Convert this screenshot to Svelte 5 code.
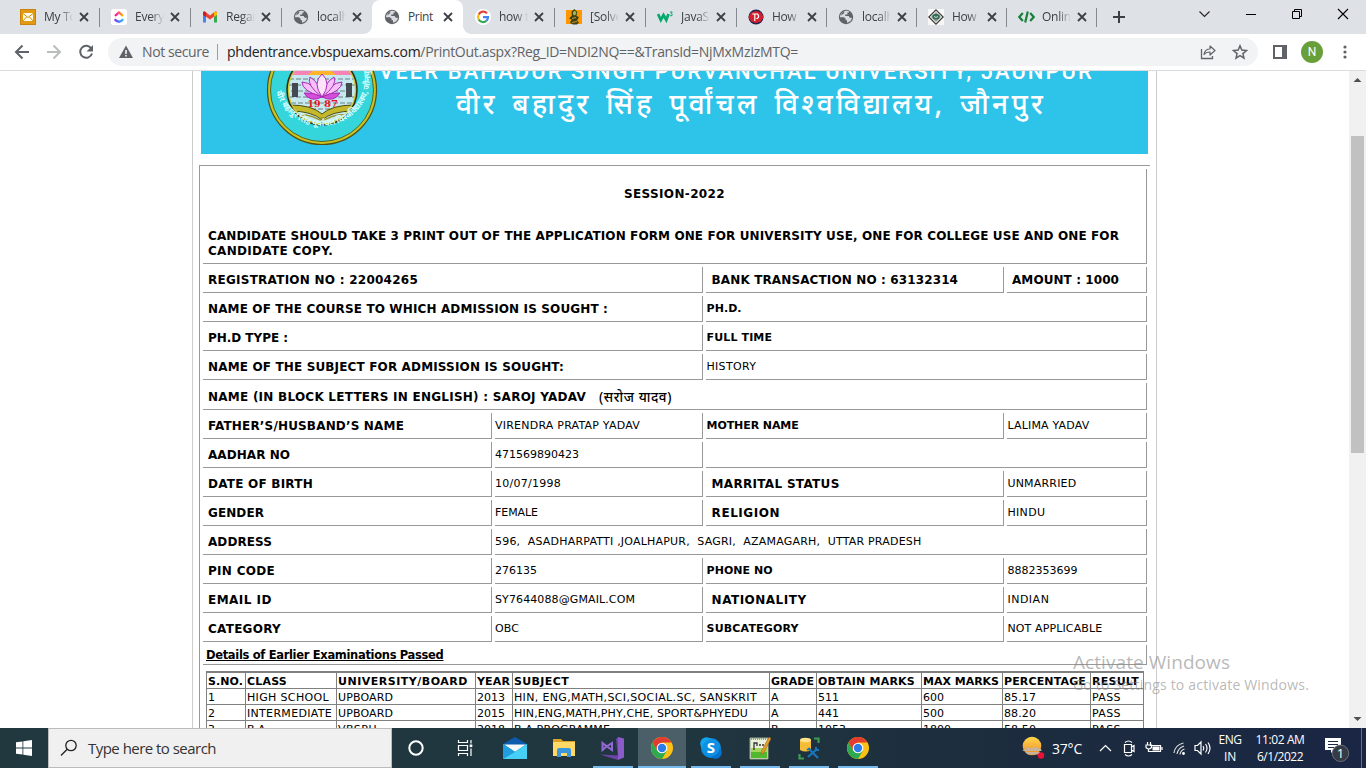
<script>
  const tabs = [
    { icon: 'mail', title: 'My To', w: 91 },
    { icon: 'clickup', title: 'Every', w: 91, n: 29, sep: true },
    { icon: 'gmail', title: 'Regar', w: 91, sep: true },
    { icon: 'globe', title: 'localh', w: 91, sep: true },
    { icon: 'globe', title: 'Print', w: 91, n: 25, active: true },
    { icon: 'google', title: 'how t', w: 91 },
    { icon: 'solved', title: '[Solve', w: 91, sep: true },
    { icon: 'w3', title: 'JavaSc', w: 91, sep: true },
    { icon: 'pro', title: 'How', w: 90, n: 24, sep: true },
    { icon: 'globe', title: 'localh', w: 90, sep: true },
    { icon: 'diamond', title: 'How', w: 90, n: 24, sep: true },
    { icon: 'code', title: 'Onlin', w: 90, sep: true }
  ];

  // k: l = large bold label, b = small bold, v = plain value; s = column span; n = text width; o = text offset class
  const rows = [
    [{ k: 'l', t: 'REGISTRATION NO : 22004265', s: 2, n: 210 }, { k: 'l', o: 1, t: 'BANK TRANSACTION NO : 63132314', n: 246.5 }, { k: 'l', t: 'AMOUNT : 1000', n: 107 }],
    [{ k: 'l', t: 'NAME OF THE COURSE TO WHICH ADMISSION IS SOUGHT :', s: 2, n: 400 }, { k: 'b', t: 'PH.D.', s: 2, n: 35 }],
    [{ k: 'l', t: 'PH.D TYPE :', s: 2, n: 80 }, { k: 'b', t: 'FULL TIME', s: 2, n: 65.5 }],
    [{ k: 'l', t: 'NAME OF THE SUBJECT FOR ADMISSION IS SOUGHT:', s: 2, n: 356 }, { k: 'v', o: 1, t: 'HISTORY', s: 2, n: 50 }],
    [{ k: 'l', t: 'NAME (IN BLOCK LETTERS IN ENGLISH) : SAROJ YADAV', s: 4, n: 378, hindi: '(सरोज यादव)' }],
    [{ k: 'l', t: 'FATHER’S/HUSBAND’S NAME', n: 196 }, { k: 'v', t: 'VIRENDRA PRATAP YADAV', n: 145 }, { k: 'b', t: 'MOTHER NAME', n: 92 }, { k: 'v', o: 1, t: 'LALIMA YADAV', n: 82 }],
    [{ k: 'l', t: 'AADHAR NO', n: 82 }, { k: 'v', t: '471569890423', n: 84 }, { k: 'v', t: '', s: 2 }],
    [{ k: 'l', t: 'DATE OF BIRTH', n: 105 }, { k: 'v', t: '10/07/1998', n: 66 }, { k: 'l', o: 1, t: 'MARRITAL STATUS', n: 128 }, { k: 'v', o: 1, t: 'UNMARRIED', n: 69 }],
    [{ k: 'l', t: 'GENDER', n: 56 }, { k: 'v', t: 'FEMALE', n: 43 }, { k: 'l', o: 1, t: 'RELIGION', n: 68.5 }, { k: 'v', o: 1, t: 'HINDU', n: 38 }],
    [{ k: 'l', t: 'ADDRESS', n: 64 }, { k: 'v', t: '596,  ASADHARPATTI ,JOALHAPUR,  SAGRI,  AZAMAGARH,  UTTAR PRADESH', s: 3, n: 426.5 }],
    [{ k: 'l', t: 'PIN CODE', n: 67 }, { k: 'v', t: '276135', n: 42 }, { k: 'b', t: 'PHONE NO', n: 66 }, { k: 'v', o: 1, t: '8882353699', n: 70 }],
    [{ k: 'l', t: 'EMAIL ID', n: 64 }, { k: 'v', t: 'SY7644088@GMAIL.COM', n: 140 }, { k: 'l', o: 1, t: 'NATIONALITY', n: 95 }, { k: 'v', o: 1, t: 'INDIAN', n: 42 }],
    [{ k: 'l', t: 'CATEGORY', n: 73 }, { k: 'v', t: 'OBC', n: 24 }, { k: 'b', t: 'SUBCATEGORY', n: 92 }, { k: 'v', o: 1, t: 'NOT APPLICABLE', n: 95 }]
  ];

  const heads = [['S.NO.', 35], ['CLASS', 40], ['UNIVERSITY/BOARD', 130], ['YEAR', 33], ['SUBJECT', 55], ['GRADE', 43], ['OBTAIN MARKS', 97], ['MAX MARKS', 76], ['PERCENTAGE', 82], ['RESULT', 47]];
  const exams = [
    [['1'], ['HIGH SCHOOL', 82], ['UPBOARD', 55], ['2013', 28], ['HIN, ENG,MATH,SCI,SOCIAL.SC, SANSKRIT', 243], ['A'], ['511', 21], ['600', 21], ['85.17', 32], ['PASS', 29]],
    [['2'], ['INTERMEDIATE', 85], ['UPBOARD', 55], ['2015', 28], ['HIN,ENG,MATH,PHY,CHE, SPORT&PHYEDU', 234], ['A'], ['441', 21], ['500', 21], ['88.20', 32], ['PASS', 29]],
    [['3'], ['B.A.', 22], ['VBSPU', 39], ['2018', 28], ['B.A PROGRAMME', 96], ['B'], ['1053', 28], ['1800', 28], ['58.50', 32], ['PASS', 29]]
  ];

  const apps = ['mail', 'folder', 'vs', 'chrome', 'skype', 'npp', 'sql', 'chrome'];

  // Tracks a line of text out to the given width.
  function fit(node, width) {
    if (!width) return;
    const measure = () => {
      const r = document.createRange();
      r.selectNodeContents(node);
      return r.getBoundingClientRect().width;
    };
    node.style.letterSpacing = '0px';
    const a = measure();
    node.style.letterSpacing = '1px';
    const b = measure();
    if (b > a) node.style.letterSpacing = (width - a) / (b - a) + 'px';
  }
</script>

{#snippet globe()}
  <svg width="16" height="16" viewBox="0 0 16 16"><circle cx="8" cy="8" r="7.200" fill="#5f6368" /><path d="M1.800 8.200h4.100l1.700 1.600v1.500H9v2.500c3-.4 4.800-2.700 4.900-5h-2.200l-1-1.700H7.200V5.500h2.200V3.600h1.300l.5-1.200C7.500 .6 2.800 3 1.800 8.200z" fill="#dee1e6" opacity=".95" /><path d="M3.200 6.500L6 4.200l.4-2L3.800 4z" fill="#5f6368" /></svg>
{/snippet}

{#snippet favicon(name)}
  {#if name === 'globe'}
    {@render globe()}
  {:else if name === 'mail'}
    <svg width="16" height="16" viewBox="0 0 16 16"><rect width="16" height="16" fill="#e39a13" /><rect x=".5" y=".5" width="15" height="15" fill="none" stroke="#c9820c" /><rect x="3" y="4" width="10" height="8" fill="#fffbe8" /><path d="M3 4.500l5 4 5-4M3 12l3.500-4M13 12L9.500 8" fill="none" stroke="#d58d10" /></svg>
  {:else if name === 'clickup'}
    <svg width="16" height="16" viewBox="0 0 16 16"><defs><linearGradient id="cu1"><stop stop-color="#ff02b5" /><stop offset="1" stop-color="#ffb400" /></linearGradient><linearGradient id="cu2"><stop stop-color="#7b2ff7" /><stop offset="1" stop-color="#2ac4ff" /></linearGradient></defs><rect width="16" height="16" rx="2.500" fill="#fff" /><path d="M4 6.800L8 3.400l4 3.400" fill="none" stroke="url(#cu1)" stroke-width="2.300" /><path d="M3.700 10.300q4.300 5 8.600 0" fill="none" stroke="url(#cu2)" stroke-width="2.400" /></svg>
  {:else if name === 'gmail'}
    <svg width="16" height="16" viewBox="0 0 16 16"><path d="M1 4v9.500h3V6z" fill="#4285f4" /><path d="M12 6v7.500h3V4z" fill="#34a853" /><path d="M1 3.500Q1 2 3 2.500l5 4 5-4q2-.5 2 1v2L8 10.500l-7-5z" fill="#ea4335" /><path d="M12 3.300q3-2 3 .7v1.800L12 8z" fill="#fbbc04" /><path d="M1 4v2l3 2V3.300q-3-2-3 .7z" fill="#c5221f" /></svg>
  {:else if name === 'google'}
    <svg width="16" height="16" viewBox="0 0 16 16"><circle cx="8" cy="8" r="8" fill="#fff" /><g fill="none" stroke-width="2.200"><path d="M12 4.400A5 5 0 0 0 3.700 5.500" stroke="#ea4335" /><path d="M3.700 5.500a5 5 0 0 0 0 5" stroke="#fbbc05" /><path d="M3.700 10.500a5 5 0 0 0 7.700 1.300" stroke="#34a853" /><path d="M8 8.200h5a5 5 0 0 1-1.600 3.600" stroke="#4285f4" /></g></svg>
  {:else if name === 'solved'}
    <svg width="16" height="16" viewBox="0 0 16 16"><rect y="1" width="16" height="14" fill="#ff9800" /><path d="M8.500 0L5.500 2.500l.3 4L3 9.500l2.500 1L4 14l3 1.500h4l2-2-2-2 2-3.500-2.500-1 .8-4z" fill="#3c4413" /><path d="M7 3l2-1.500L10.500 4 9 6.500 7 5.500z" fill="#a7b35d" /><path d="M6 9.500l4-1M6 13.500l5-1" stroke="#c49a35" /></svg>
  {:else if name === 'w3'}
    <svg width="17" height="16" viewBox="0 0 17 16"><path d="M1 5l2.800 6L6.500 6l2.800 5L11.500 5" fill="none" stroke="#04aa6d" stroke-width="2.700" /><path d="M13 3h2.300L14 4.500q2 .5 1 2-1 .8-2 0" fill="none" stroke="#04aa6d" /></svg>
  {:else if name === 'pro'}
    <svg width="16" height="16" viewBox="0 0 16 16"><circle cx="8" cy="8" r="7.500" fill="#1d2550" /><circle cx="8" cy="8" r="5.900" fill="#d3202f" /><path d="M4 2.500L.3 8 4 13.500zM12 2.500L15.700 8 12 13.500z" fill="#d3202f" /><path d="M6.800 12V5h2.500q2.800 2.200 0 4.500H8.300M4.300 5h2.500" fill="none" stroke="#fff" stroke-width="1.200" /></svg>
  {:else if name === 'diamond'}
    <svg width="16" height="16" viewBox="0 0 16 16"><rect width="16" height="16" fill="#f7f7f7" /><path d="M8 .8L15.200 8 8 15.200.8 8z" fill="#eee" stroke="#333" stroke-width="1.100" /><path d="M8 3l5 5-5 5-5-5z" fill="#999" /><path d="M4.500 6q3.500-2 7 0v3q-3.500 3-7 0z" fill="#2f6d53" /><path d="M6 7.500l2 1 2-1" stroke="#fff" fill="none" stroke-width=".8" /></svg>
  {:else}
    <svg width="17" height="16" viewBox="0 0 17 16"><path d="M4.800 4L1.300 8l3.500 4M12.200 4l3.500 4-3.500 4M9.800 2.500L7.200 13.500" fill="none" stroke="#188038" stroke-width="2.200" /></svg>
  {/if}
{/snippet}

{#snippet appicon(name)}
  {#if name === 'mail'}
    <svg width="24" height="22" viewBox="0 0 24 22"><path d="M0 7L12 0l12 7v4H0z" fill="#0b5cad" /><path d="M1 7.500h22L12 15z" fill="#f4f8fa" /><path d="M0 7l12 8L24 7v15H0z" fill="#29b0ec" /><path d="M0 22L24 7v15z" fill="#47d0f5" /><path d="M0 7l12 8-12 7z" fill="#1f9ee0" /></svg>
  {:else if name === 'folder'}
    <svg width="22" height="20" viewBox="0 0 22 20"><path d="M0 1h8l2 2h12v15H0z" fill="#dca126" /><path d="M0 4h22v14H0z" fill="#ffd866" /><path d="M4 19v-7q0-2 2-2h10q2 0 2 2v7h-4v-4H8v4z" fill="#3a96dd" /></svg>
  {:else if name === 'vs'}
    <svg width="25" height="24" viewBox="0 0 25 24"><path d="M18 1l6 1.500v19L18 24z" fill="#8b5cc7" /><path d="M0 18.500l18 1V24zM16 3l2-2v20z" fill="#6d43a8" /><path d="M2.500 7v7l4-3.500zL12 14V7l-5.500 3.500" fill="none" stroke="#9267d2" stroke-width="2" /></svg>
  {:else if name === 'chrome'}
    <svg width="22" height="22" viewBox="0 0 22 22"><circle cx="11" cy="11" r="11" fill="#fbc116" /><path d="M1.500 5.500A11 11 0 0 1 20.500 5.500H11L6.200 13.700z" fill="#e33b2e" /><path d="M1.500 5.500a11 11 0 0 0 9.500 16.500l4.800-8.200H6.200z" fill="#2da94f" /><circle cx="11" cy="11" r="5.300" fill="#fff" /><circle cx="11" cy="11" r="4.200" fill="#2b7de9" /></svg>
  {:else if name === 'skype'}
    <svg width="22" height="22" viewBox="0 0 22 22"><circle cx="11" cy="11" r="10" fill="#0c8de4" /><circle cx="6.500" cy="6.500" r="6.300" fill="#12a5ed" /><circle cx="15.500" cy="15.500" r="6.300" fill="#0672cf" /><circle cx="11" cy="11" r="8.500" fill="#0d91e2" /><text x="11" y="16.200" text-anchor="middle" font-family="Open Sans" font-size="15" font-weight="700" fill="#fff">S</text></svg>
  {:else if name === 'npp'}
    <svg width="22" height="24" viewBox="0 0 22 24"><path d="M1 2h18v21H1z" fill="#e9f1db" stroke="#93a484" /><path d="M2 15h16v7H2z" fill="#54b82f" /><path d="M2 12h16v4H2z" fill="#a5d75f" /><path d="M2 3h16" stroke="#999" stroke-width="2" stroke-dasharray="1 1" /><path d="M5 14V7h3v3M10 9h2M13 9h2" fill="none" stroke="#333" stroke-width="1.300" /><path d="M20 1l2 1.500-7 14-3 2 .5-3.500z" fill="#e99b27" stroke="#99611f" stroke-width=".6" /></svg>
  {:else}
    <svg width="22" height="23" viewBox="0 0 22 23"><path d="M2 3v10q5.500 3 11 0V3z" fill="#f6bc38" /><ellipse cx="7.500" cy="3" rx="5.500" ry="2.300" fill="#ffe28a" /><path d="M16 1.500h4.500V6M1.500 17v4.500H6" fill="none" stroke="#3e9c51" stroke-width="2.200" /><path d="M10 20l9-8M11 12l9 9" stroke="#1976bd" stroke-width="2.200" /><path d="M9 13l3-2M18 10v3h3" stroke="#1976bd" fill="none" stroke-width="2" /></svg>
  {/if}
{/snippet}

<div class="screen">
  <div class="tabstrip">
    {#each tabs as t}
      <div class="tab" class:active={t.active} class:sep={t.sep} style="width:{t.w}px">
        <span class="fav">{@render favicon(t.icon)}</span>
        <span class="ttl"><span use:fit={t.n}>{t.title}</span></span>
        <svg class="x" width="10" height="10" viewBox="0 0 10 10"><path d="M1 1l8 8M9 1L1 9" stroke="#3c4043" stroke-width="1.800" /></svg>
      </div>
    {/each}
    <div class="new sep"><svg width="12" height="12" viewBox="0 0 12 12"><path d="M6 0v12M0 6h12" stroke="#3c4043" stroke-width="2" /></svg></div>
    <div class="winctl">
      <svg viewBox="0 0 46 28"><path d="M17.500 11.500l5 5 5-5" fill="none" stroke="#222" stroke-width="1.100" /></svg>
      <svg viewBox="0 0 46 28"><path d="M18 14.500h10" stroke="#000" /></svg>
      <svg viewBox="0 0 46 28"><path d="M18.500 11.500h7v7h-7zM20.500 11V9.500h7v7H26" fill="none" stroke="#000" /></svg>
      <svg viewBox="0 0 46 28"><path d="M18 9l10 10M28 9L18 19" stroke="#000" stroke-width="1.100" /></svg>
    </div>
  </div>

  <div class="toolbar">
    <svg class="nav" width="108" height="36" viewBox="0 0 108 36"><g fill="none" stroke-width="2"><path d="M29 18H16M22.500 11.500L16 18l6.500 6.500" stroke="#5f6368" /><path d="M47 18h13M53.500 11.500L60 18l-6.500 6.500" stroke="#babcbe" /><path d="M91.300 14.500A6 6 0 1 0 92 19.500" stroke="#5f6368" /></g><path d="M93 11v6.500h-6.500z" fill="#5f6368" /></svg>
    <div class="omni">
      <svg width="14" height="14" viewBox="0 0 14 14"><path d="M7 .5L14 13H0z" fill="#5f6368" /><path d="M7 5v4M7 10v1.600" stroke="#fff" stroke-width="1.500" /></svg>
      <span class="ns" use:fit={67}>Not secure</span>
      <i class="bar"></i>
      <span class="url" use:fit={571}><b>phdentrance.vbspuexams.com</b>/PrintOut.aspx?Reg_ID=NDI2NQ==&amp;TransId=NjMxMzIzMTQ=</span>
      <svg class="share" width="50" height="16" viewBox="0 0 50 16"><path d="M1.500 5v9.500h11V12" fill="none" stroke="#5f6368" stroke-width="1.300" /><path d="M4 10.500q1-5.500 6-5.500V2l5 4.500-5 4.500V8Q6 8 4 10.500z" fill="none" stroke="#5f6368" stroke-width="1.200" stroke-linejoin="round" /><path d="M40 1.800l1.800 4.300 4.700.4-3.600 3.100 1.100 4.600-4-2.500-4 2.500 1.100-4.600-3.600-3.100 4.700-.4z" fill="none" stroke="#5f6368" stroke-width="1.500" /></svg>
    </div>
    <svg class="panel" width="14" height="14" viewBox="0 0 14 14"><rect x="1" y="1" width="12" height="12" fill="none" stroke="#5f6368" stroke-width="2" /><path d="M9 1h4v12H9z" fill="#5f6368" /></svg>
    <div class="avatar">N</div>
    <svg class="dots" width="4" height="14" viewBox="0 0 4 14" fill="#5f6368"><circle cx="2" cy="2" r="1.600" /><circle cx="2" cy="7" r="1.600" /><circle cx="2" cy="12" r="1.600" /></svg>
  </div>

  <div class="view">
    <div class="sheet">
      <div class="banner">
        <svg class="seal" width="112" height="84" viewBox="0 0 112 84">
          <defs><path id="arc" d="M7 -3A50 50 0 1 0 105 -3" /><clipPath id="inn"><circle cx="56" cy="19" r="33" /></clipPath></defs>
          <circle cx="56" cy="19" r="54.500" fill="#c9c21f" stroke="#544f10" stroke-width="1.200" />
          <circle cx="56" cy="19" r="51.500" fill="#35d5dc" stroke="#5a661c" stroke-width="1" />
          <circle cx="56" cy="19" r="35" fill="#cfc52a" stroke="#2b2b12" stroke-width="1.500" />
          <g clip-path="url(#inn)">
            <rect x="20" y="-10" width="72" height="70" fill="#c5e9ef" />
            <rect x="20" y="-10" width="72" height="14" fill="#f783b5" /><path d="M42 4q14-14 28 0z" fill="#ffb52b" />
            <path d="M23 8h66M23 14h66M25 20h62M23 26h66M25 32h62M24 38h64" stroke="#56666b" stroke-width=".8" stroke-dasharray="5 2" />
            <path d="M26 12h6v14h-6zM80 12h6v14h-6z" fill="#444b50" />
            <g fill="#f7bff7" stroke="#a52cb4" stroke-width="1"><path d="M56 26Q36 20 36 11q12 1 20 15zM56 26q20-6 20-15-12 1-20 15z" /><path d="M56 26Q40 14 44 6q10 6 12 20zM56 26q16-12 12-20-10 6-12 20z" /><path d="M56 26Q46 12 56 3q10 9 0 23z" fill="#ffe3fb" /><path d="M56 26q-12 6-18-4 10-1 18 4zM56 26q12 6 18-4-10-1-18 4z" fill="#d54edb" /></g>
            <path d="M24 34q22 0 32 9 10-9 32-9v6q-22 0-32 9-10-9-32-9z" fill="#c4b92a" stroke="#4f4c13" />
            <path d="M28 44q18-2 28 7 10-9 28-7M54.500 47h3v8h-3z" fill="none" stroke="#9a921f" stroke-width="1.500" />
          </g>
          <text x="41.500" y="36" class="yr" textLength="13" lengthAdjust="spacingAndGlyphs">19</text><text x="58" y="36" class="yr" textLength="14" lengthAdjust="spacingAndGlyphs">87</text>
          <text class="ring" dy="-2"><textPath href="#arc" startOffset="25">वीर बहादुर सिंह पूर्वांचल विश्वविद्यालय, जौनपुर</textPath></text>
        </svg>
        <div class="names">
          <div class="en"><span use:fit={715}>VEER BAHADUR SINGH PURVANCHAL UNIVERSITY, JAUNPUR</span></div>
          <div class="hi"><span use:fit={590}>वीर बहादुर सिंह पूर्वांचल विश्वविद्यालय, जौनपुर</span></div>
        </div>
      </div>

      <div class="form">
        <div class="grid">
          <div class="cell intro">
            <div class="session"><span use:fit={101}>SESSION-2022</span></div>
            <div class="note"><span use:fit={911}>CANDIDATE SHOULD TAKE 3 PRINT OUT OF THE APPLICATION FORM ONE FOR UNIVERSITY USE, ONE FOR COLLEGE USE AND ONE FOR</span></div>
            <div class="note"><span use:fit={125}>CANDIDATE COPY.</span></div>
          </div>
          {#each rows as row}
            {#each row as c}
              <div class="cell {c.k}" class:off={c.o} class:tall={c.hindi} style="grid-column:span {c.s ?? 1}">
                <span use:fit={c.n}>{c.t}</span>
                {#if c.hindi}<span class="own" use:fit={73}>{c.hindi}</span>{/if}
              </div>
            {/each}
          {/each}
          <div class="cell details"><u use:fit={237.500}>Details of Earlier Examinations Passed</u></div>
        </div>
        <div class="exams">
          {#each heads as [t, n]}<div class="th"><span use:fit={n}>{t}</span></div>{/each}
          {#each exams as row}
            {#each row as [t, n]}<div class="td"><span use:fit={n}>{t}</span></div>{/each}
          {/each}
        </div>
      </div>
    </div>
    <div class="scroll">
      <svg width="17" height="17" viewBox="0 0 17 17"><path d="M4.500 11h8l-4-4z" fill="#505050" /></svg>
      <div class="thumb"></div>
      <svg width="17" height="17" viewBox="0 0 17 17"><path d="M4.500 6h8l-4 4z" fill="#505050" /></svg>
    </div>
  </div>

  <div class="taskbar">
    <div class="start"><svg width="16" height="16" viewBox="0 0 16 16" fill="#fff"><path d="M0 2.300L6.500 1.400v6.200H0zM7.300 1.300L16 0v7.600H7.300zM0 8.400h6.500v6.200L0 13.700zM7.300 8.400H16V16l-8.700-1.300z" /></svg></div>
    <div class="search">
      <svg width="18" height="18" viewBox="0 0 18 18"><circle cx="11" cy="6.500" r="5.200" fill="none" stroke="#222" stroke-width="1.300" /><path d="M7.200 10.300L1 16.500" stroke="#222" stroke-width="1.300" /></svg>
      <span use:fit={128}>Type here to search</span>
    </div>
    <div class="slot"><svg width="16" height="16" viewBox="0 0 16 16"><circle cx="8" cy="8" r="6.700" fill="none" stroke="#fff" stroke-width="2" /></svg></div>
    <div class="slot tv"><svg width="17" height="16" viewBox="0 0 17 16"><path d="M1.500 0v2.500h9V0M1.500 16v-2.500h9V16M1.500 5.500h9v5h-9zM14 0v3.500M14 8.500V16" fill="none" stroke="#fff" stroke-width="1.200" /><rect x="12.700" y="4.500" width="2.600" height="2.600" fill="#fff" /></svg></div>
    {#each apps as a, i}
      <div class="app" class:run={i > 1} class:focus={i === 3}>{@render appicon(a)}</div>
    {/each}
    <div class="tray">
      <svg class="sun" width="24" height="24" viewBox="0 0 24 24"><defs><linearGradient id="sg" x2="0" y2="1"><stop stop-color="#ffd84a" /><stop offset="1" stop-color="#f0872a" /></linearGradient></defs><circle cx="11" cy="10" r="9.300" fill="url(#sg)" /><path d="M3 14q3-4 8-1.500 4-3 7 0 4 1 2 2.500H3Q0 15 3 14zM5 16h14q0 3-4 2.500H8Q5 18 5 16z" fill="#c4b39d" /><circle cx="20" cy="19.500" r="3.200" fill="#e81137" /></svg>
      <span class="temp" use:fit={30}>37°C</span>
      <svg class="icons" width="114" height="20" viewBox="0 0 114 20"><g fill="none" stroke="#fff" stroke-width="1.200"><path d="M2 13l5.500-5.500L13 13" /><path d="M26.500 6.500h7v8h-7zM33.500 9l2.500-1.500v6L33.500 12M27 4.500q3.500-3 7 0M27 16.500q3.500 3 7 0" /><path d="M52 7.500h10.500v6H50M64 9v3M49.500 4v3M52.500 4v3M48 7h5.500v2.500q-2.700 3-5.500 0zM50.500 11v3" /><path d="M76 15q1-8 9.500-10M79 16q1-6 7-8M82 16.500q.5-4 4.500-5.500" stroke="#ddd" /><path d="M97 7.500h2.500L103 4v12l-3.500-3.500H97zM105 8q1.500 2 0 4.500M107.500 6q3 4 0 8.500M110 4.500q4 5.500 0 11.500" /></g><path d="M54.500 8.500h7v4h-7z" fill="#fff" /><circle cx="85.500" cy="15.500" r="1.400" fill="#fff" /></svg>
      <div class="lang"><span use:fit={23}>ENG</span><span use:fit={12}>IN</span></div>
      <div class="clock"><span use:fit={49}>11:02 AM</span><span use:fit={46}>6/1/2022</span></div>
      <svg class="notif" width="26" height="26" viewBox="0 0 26 26"><path d="M1 2h16v12h-7l-3 3v-3H1z" fill="#fff" /><path d="M4 5.500h10M4 8.500h10M4 11.500h6" stroke="#1b2b42" /><circle cx="16.500" cy="17.300" r="8.200" fill="#343b45" stroke="#6b7079" /><text x="16.500" y="22" text-anchor="middle" font-family="Open Sans" font-size="13" fill="#fff">1</text></svg>
      <i class="peek"></i>
    </div>
  </div>

  <div class="mark"><div class="m1"><span use:fit={157}>Activate Windows</span></div><div class="m2"><span use:fit={236}>Go to Settings to activate Windows.</span></div></div>
</div>

<style>
  :global(body) { margin: 0; overflow: hidden; }
  svg { display: block; flex: none; }
  span, u { white-space: pre; }
  .screen { position: relative; width: 1366px; height: 768px; overflow: hidden; background: #fff; display: flex; flex-direction: column; font-family: 'Open Sans', sans-serif; }
  .tabstrip { height: 34px; background: #dee1e6; display: flex; padding-left: 8px; box-sizing: border-box; align-items: flex-start; }
  .tab { height: 34px; box-sizing: border-box; display: flex; align-items: center; padding-left: 12px; flex: none; }
  .sep { background: linear-gradient(#85898e, #85898e) left 8px / 1px 19px no-repeat; }
  .tab.active { background: #fff; border-radius: 8px 8px 0 0; position: relative; }
  .active::before, .active::after { content: ''; position: absolute; bottom: 0; width: 8px; height: 8px; }
  .active::before { left: -8px; background: radial-gradient(circle at 0 0, transparent 7.500px, #fff 8px); }
  .active::after { right: -8px; background: radial-gradient(circle at 100% 0, transparent 7.500px, #fff 8px); }
  .fav { width: 16px; }
  .ttl { width: 29px; margin-left: 8px; overflow: hidden; font-size: 12px; line-height: 18px; color: #3c4043; letter-spacing: -.25px; -webkit-mask-image: linear-gradient(90deg, #000 55%, transparent); mask-image: linear-gradient(90deg, #000 55%, transparent); }
  .active .ttl { mask-image: none; -webkit-mask-image: none; }
  .x { margin-left: 6px; }
  .new { width: 46px; height: 34px; padding: 11px 0 0 17px; box-sizing: border-box; }
  .winctl { margin-left: auto; display: flex; }
  .winctl svg { width: 46px; height: 28px; }
  .toolbar { height: 36px; display: flex; align-items: center; border-bottom: 1px solid #d9dbdf; }
  .omni { width: 1150px; height: 28px; border-radius: 14px; background: #f1f3f4; display: flex; align-items: center; padding-left: 11px; box-sizing: border-box; font-size: 14px; line-height: 20px; color: #5f6368; }
  .ns { width: 67px; margin-left: 9px; }
  .bar { width: 1px; height: 16px; background: #9aa0a6; margin: 0 9px 0 8px; }
  .url { width: 573px; }
  .url b { font-weight: 400; color: #202124; }
  .share { margin-left: auto; margin-right: 8px; }
  .panel { margin-left: 15px; }
  .avatar { margin-left: 14px; width: 22px; height: 22px; border-radius: 50%; background: #689f38; color: #fff; font: 12px/22px Roboto, sans-serif; text-align: center; }
  .dots { margin-left: 20px; }
  .view { height: 657px; display: flex; justify-content: space-between; overflow: hidden; }
  .sheet { margin-left: 192px; width: 963px; border: solid #ccc; border-width: 0 1px; height: 657px; overflow: hidden; }
  .banner { height: 83px; width: 947px; margin-left: 8px; background: #2ec3e9; display: flex; overflow: hidden; color: #fff; }
  .seal { margin-left: 65px; }
  .yr { font: 700 10px 'DejaVu Serif', serif; fill: #e8101c; }
  .ring { font: 700 8.500px 'Noto Sans', 'Noto Sans Devanagari', sans-serif; fill: #d5ffff; }
  .names { display: flex; flex-direction: column; margin-left: 1px; }
  .en { font: 500 22px/26px Roboto, sans-serif; margin-top: -12px; }
  .hi { font: 500 28px/40px 'Noto Sans', 'Noto Sans Devanagari', sans-serif; margin: -2px 0 0 77px; word-spacing: 4px; }
  .form { margin: 11px 0 0 6px; width: 951px; box-sizing: border-box; border: solid #999; border-width: 1px 0 0 1px; padding: 3px 3px 0; height: 600px; font-family: Verdana, 'DejaVu Sans', sans-serif; color: #000; }
  .grid { display: grid; grid-template-columns: 289px 208px 298px 140px; grid-auto-rows: auto; gap: 3px; margin-right: -3px; }
  .cell { height: 26px; box-sizing: border-box; border: solid #999; border-width: 0 1px 1px 0; display: flex; align-items: center; font-size: 11px; line-height: 14px; }
  .cell.l { font-size: 12px; font-weight: 700; padding-left: 5px; }
  .cell.b { font-weight: 700; padding-left: .6px; padding-top: 1px; }
  .cell.v { padding-left: 0; padding-top: 1px; }
  .cell.v.off { padding-left: .4px; }
  .cell.l.off { padding-left: 5.600px; }
  .cell.tall { height: 27px; padding-top: 1px; }
  .own { margin-left: 13px; font-family: 'Noto Sans', 'Noto Sans Devanagari', sans-serif; font-weight: 500; font-size: 13.500px; }
  .intro { grid-column: span 4; height: 95px; flex-direction: column; align-items: stretch; font-size: 12px; font-weight: 700; line-height: 15px; padding-left: 5px; }
  .session { text-align: center; margin: 18px 5px 27px 0; }
  .cell.details { grid-column: span 4; height: 20px; font-size: 11.500px; font-weight: 700; padding-left: 3px; }
  .details u { text-underline-offset: 1px; text-decoration-thickness: 1px; text-decoration-skip-ink: none; }
  .exams { margin: 6px 0 0 3px; width: 938px; display: grid; grid-template-columns: 39px 91px 139px 37px 257px 47px 105px 81px 88px 53px; grid-auto-rows: 16px; border-left: 1px solid #808080; border-top: 2px solid #808080; box-sizing: border-box; }
  .th, .td { border: solid #808080; border-width: 0 1px 1px 0; box-sizing: border-box; padding: 1px 0 0 1px; font-size: 11px; line-height: 15px; height: 16px; }
  .th { font-weight: 700; }
  .scroll { width: 17px; background: #f1f1f1; display: flex; flex-direction: column; }
  .scroll svg:last-child { margin-top: auto; }
  .thumb { width: 13px; height: 317px; background: #c1c1c1; margin: 48px 0 0 2px; }
  .taskbar { height: 40px; background: linear-gradient(90deg, #21383f 0, #20363f 50%, #1c2c3e 75%, #1a2644 100%); display: flex; color: #fff; }
  .start { width: 48px; display: flex; align-items: center; justify-content: center; }
  .search { width: 344px; box-sizing: border-box; border: 1px solid #bbb; background: #f0f0f0; color: #333; display: flex; align-items: center; padding-left: 11px; font-size: 15px; gap: 10px; line-height: 20px; }
  .slot { width: 48px; display: flex; align-items: center; justify-content: center; }
  .tv { width: 50px; }
  .app { width: 40px; margin: 0 4.500px; display: flex; align-items: center; justify-content: center; box-sizing: border-box; }
  .app.run { box-shadow: inset 0 -2px #76b9ed; }
  .app.focus { width: 48px; margin: 0 .5px; background: #4b5f68; }
  .tray { display: flex; align-items: center; margin-left: auto; font-size: 12px; height: 40px; }
  .temp { font-size: 14px; margin-left: 7px; width: 30px; }
  .icons { margin-left: 16px; }
  .lang, .clock { display: flex; flex-direction: column; align-items: center; line-height: 17px; margin-top: -1px; }
  .lang { margin-left: 6px; width: 24px; }
  .clock { margin-left: 13px; width: 50px; }
  .notif { margin: 2px 0 0 19px; }
  .peek { width: 1px; height: 40px; background: #65707f; margin: 0 4px 0 11px; }
  .mark { position: absolute; left: 1073px; top: 650px; color: rgba(140, 140, 140, .62); }
  .m1 { font-size: 19px; line-height: 24px; }
  .m2 { font-size: 14px; line-height: 22px; }
</style>
